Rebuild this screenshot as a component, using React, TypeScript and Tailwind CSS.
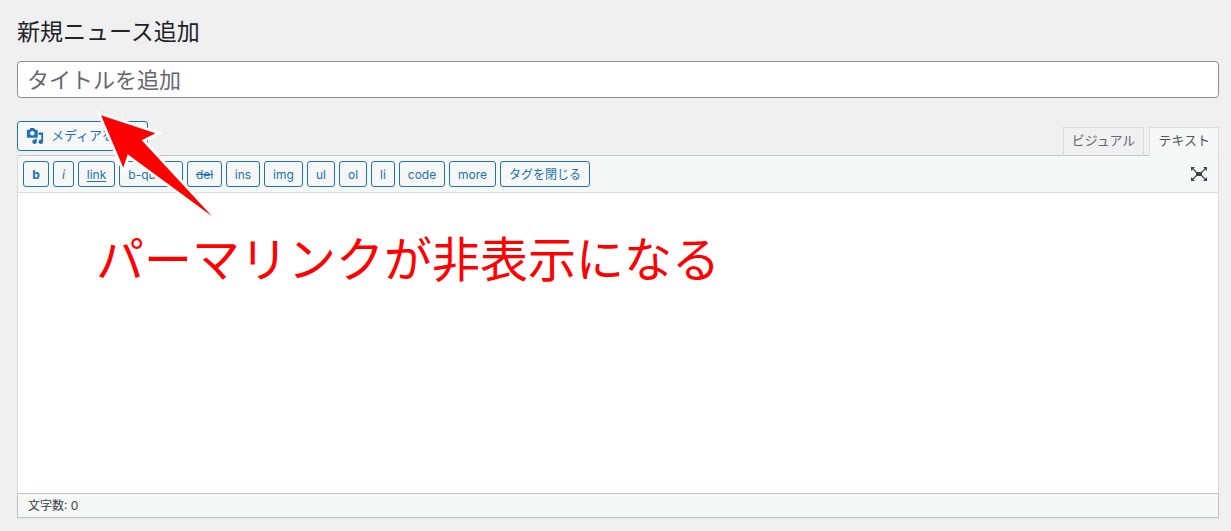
import { useState } from "react";

const quickTags = [
  { label: "b", style: "w-[26px] font-bold" },
  { label: "i", style: "w-[21px] italic" },
  { label: "link", style: "w-[37px] underline underline-offset-2" },
  { label: "b-quote", style: "w-[64px]" },
  { label: "del", style: "w-[35px] line-through" },
  { label: "ins", style: "w-[34px]" },
  { label: "img", style: "w-[39px]" },
  { label: "ul", style: "w-[28px]" },
  { label: "ol", style: "w-[28px]" },
  { label: "li", style: "w-[24px]" },
  { label: "code", style: "w-[46px]" },
  { label: "more", style: "w-[47px]" },
  { label: "タグを閉じる", style: "w-[90px]" },
];

function MediaIcon() {
  return (
    <svg viewBox="0 0 20 20" className="size-[18px] shrink-0" fill="currentColor" aria-hidden="true">
      <path d="M13 11V4c0-.55-.45-1-1-1h-1.67L9 1H5L3.67 3H2c-.55 0-1 .45-1 1v7c0 .55.45 1 1 1h10c.55 0 1-.45 1-1zM7 4.5c1.38 0 2.5 1.12 2.5 2.5S8.38 9.5 7 9.5 4.5 8.38 4.5 7 5.62 4.5 7 4.5zM14 6h5v10.5c0 1.38-1.12 2.5-2.5 2.5S14 17.88 14 16.5s1.12-2.5 2.5-2.5c.17 0 .34.02.5.05V9h-3V6zm-4 8.05V13h2v3.5c0 1.38-1.12 2.5-2.5 2.5S7 17.88 7 16.5 8.12 14 9.5 14c.17 0 .34.02.5.05z" />
    </svg>
  );
}

function ExpandIcon() {
  return (
    <svg viewBox="0 0 18 16" className="h-4 w-[18px]" aria-hidden="true">
      <path d="M6 6h6v4H6zM1 1h4L1 5zM17 1v4l-4-4zM1 15v-4l4 4zM17 15h-4l4-4z" fill="#3c434a" />
      <path d="M2 2l5 5M16 2l-5 5M2 14l5-5M16 14l-5-5" stroke="#3c434a" strokeWidth="1.1" />
    </svg>
  );
}

export default function App() {
  const [mode, setMode] = useState("text");
  const tab = "relative mt-[6px] h-[29px] cursor-pointer border border-[#dcdcde] px-2 pb-1 text-[13px] leading-6";
  const on = " z-10 border-b-[#f6f7f7] bg-[#f6f7f7] text-[#50575e]";
  const off = " border-b-[#c3c4c7] bg-[#f0f0f1] text-[#646970]";

  return (
    <main className="relative min-h-[531px] bg-[#f0f0f1] pr-3 pb-[13px] pl-[17px] font-['Inter','Noto_Sans_CJK_JP',sans-serif] text-[#3c434a]">
      <h1 className="pt-4 text-[23px] leading-8 text-[#1d2327]">新規ニュース追加</h1>
      <input
        type="text"
        aria-label="タイトルを追加"
        placeholder="タイトルを追加"
        className="mt-[13px] block h-[37px] w-full rounded-sm border border-[#8c8f94] bg-white px-[9px] text-[22px] leading-8 placeholder:text-[#646970] placeholder:opacity-100"
      />
      <div className="mt-[23px] flex items-start justify-between">
        <button className="flex h-[30px] w-[131px] items-center gap-[7px] overflow-hidden rounded-[3px] border border-[#2271b1] bg-[#f6f7f7] pl-2 text-[13px] whitespace-nowrap text-[#2271b1]">
          <MediaIcon />
          メディアを追加
        </button>
        <div className="-mb-px flex gap-[5px]" role="tablist">
          <button role="tab" aria-selected={mode === "visual"} className={tab + (mode === "visual" ? on : off)} onClick={() => setMode("visual")}>
            ビジュアル
          </button>
          <button role="tab" aria-selected={mode === "text"} className={tab + (mode === "text" ? on : off)} onClick={() => setMode("text")}>
            テキスト
          </button>
        </div>
      </div>
      <section className="border-x border-[#dcdcde] shadow-[0_1px_1px_rgba(0,0,0,0.04)]">
        <div className="flex h-[38px] items-center justify-between border-t border-b border-t-[#c3c4c7] border-b-[#dcdcde] bg-[#f6f7f7] pr-[10px] pl-[5px]">
          <div className="flex gap-1">
            {quickTags.map((tag) => (
              <button
                key={tag.label}
                className={"h-[26px] rounded-[3px] border border-[#2271b1] bg-[#f6f7f7] pt-0.5 text-center text-[12px] leading-[22px] whitespace-nowrap text-[#2271b1] " + tag.style}
              >
                {tag.label}
              </button>
            ))}
          </div>
          <button aria-label="集中執筆モード">
            <ExpandIcon />
          </button>
        </div>
        <textarea aria-label="本文" className="block h-[300px] w-full resize-none bg-white p-[10px] text-[13px] outline-none" />
        <div className="-mx-px h-[25px] border border-[#c3c4c7] bg-[#f6f7f7] px-[10px] text-[12px] leading-[23px]">文字数: 0</div>
      </section>

      <svg className="pointer-events-none absolute top-[100px] left-[80px] z-20 h-[130px] w-[150px]" viewBox="80 100 150 130" aria-hidden="true">
        <path
          d="M101 115.3L155.5 133.3 141.7 140.2 211.7 215.8 127.7 154.2 123.3 167.7z"
          fill="#fff"
          stroke="#fff"
          strokeWidth="5.5"
          strokeMiterlimit="10"
        />
        <path d="M101 115.3L155.5 133.3 141.7 140.2 212 216.2 127.7 154.2 123.3 167.7z" fill="#f00" />
      </svg>
      <p className="pointer-events-none absolute top-[224px] left-24 z-20 text-[48px] leading-[72px] whitespace-nowrap text-[#f00]">
        パーマリンクが非表示になる
      </p>
    </main>
  );
}
